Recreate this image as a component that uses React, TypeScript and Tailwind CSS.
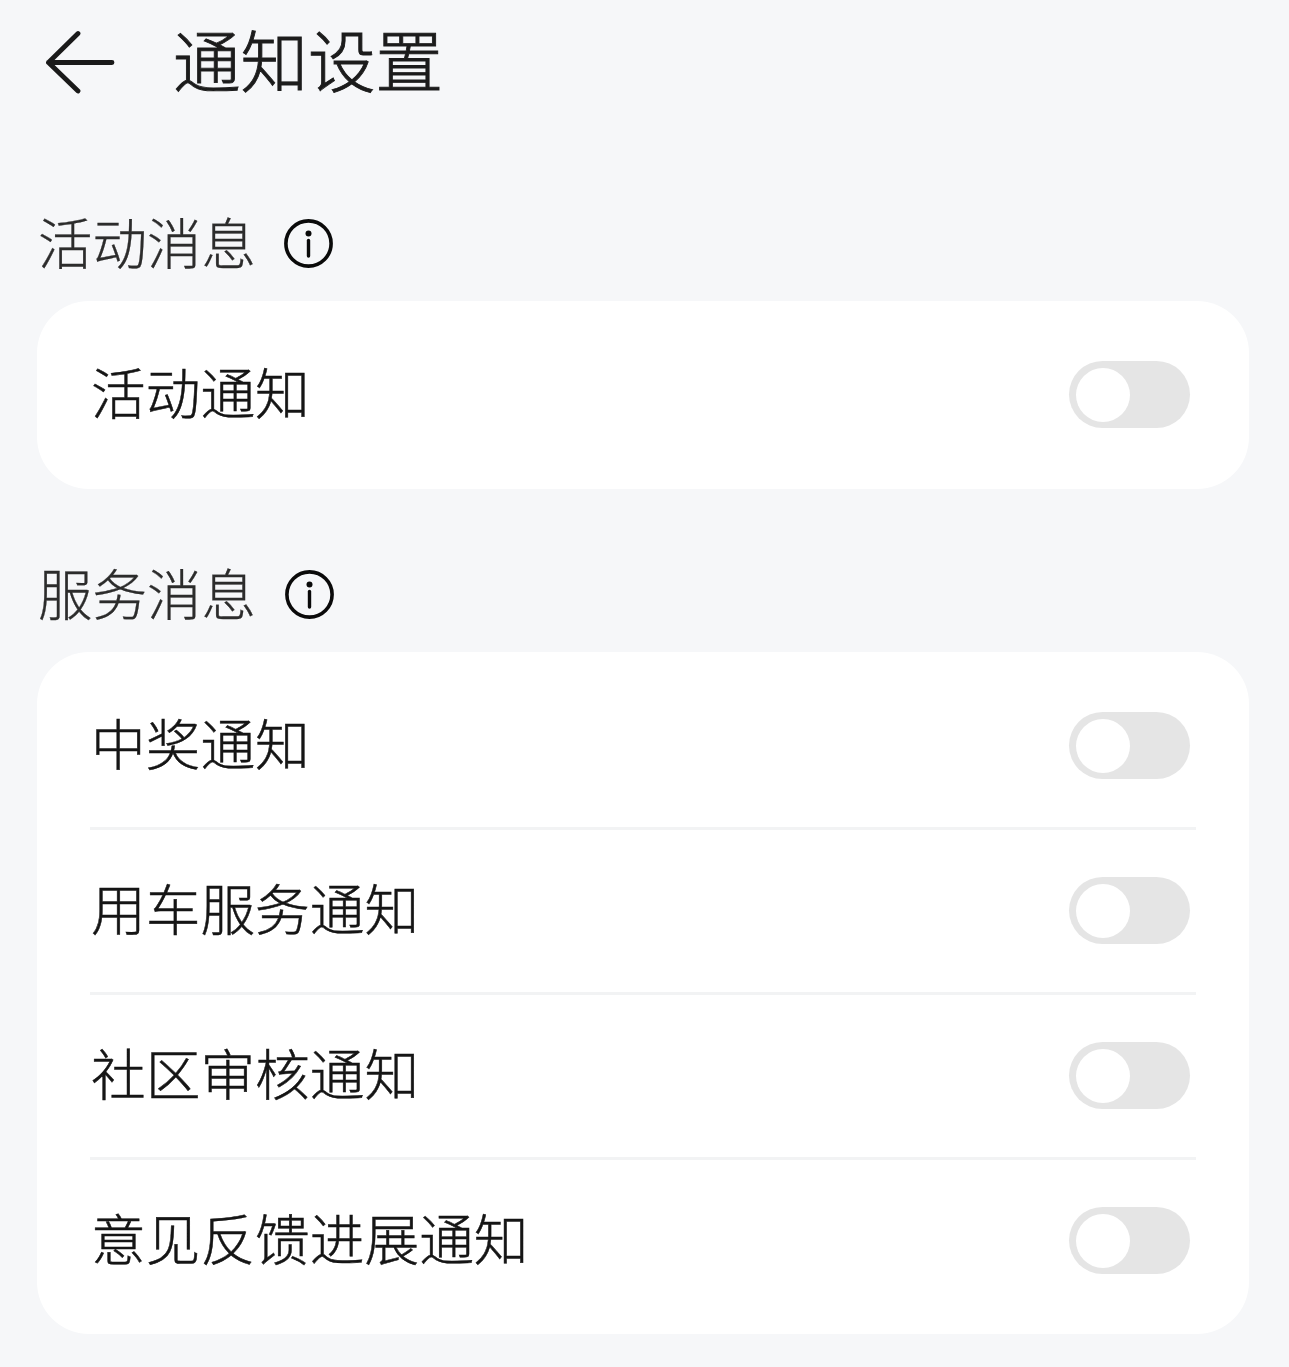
const font = '[font-family:"Noto_Sans_CJK_SC","Noto_Sans",sans-serif]';

function Info() {
  return (
    <svg width="50" height="50" viewBox="0 0 50 50" fill="none" className="shrink-0">
      <circle cx="24.5" cy="24.5" r="22.6" stroke="#0a0a0a" strokeWidth="3.6" />
      <circle cx="24.5" cy="14.5" r="3" fill="#0a0a0a" />
      <path d="M24.5 21.5V37" stroke="#0a0a0a" strokeWidth="3.4" strokeLinecap="round" />
    </svg>
  );
}

function Toggle() {
  return (
    <div className="-mt-[1px] flex h-[67px] w-[121px] shrink-0 items-center rounded-full bg-[#e5e5e5] pl-[7px]">
      <div className="h-[54px] w-[54px] rounded-full bg-white" />
    </div>
  );
}

function Row({ label }: { label: string }) {
  return (
    <div className="flex h-[162px] items-center justify-between pr-[6px]">
      <span className="pb-[7px] pl-[1px] text-[54.7px] leading-none font-light text-[#151515] [-webkit-text-stroke:0.5px_#151515]">{label}</span>
      <Toggle />
    </div>
  );
}

function Section({ title, rows, gap, bottom }: { title: string; rows: string[]; gap: string; bottom: string }) {
  return (
    <section>
      <div className={`flex h-[54px] items-center ${gap} pl-[1px]`}>
        <span className="pb-[6px] text-[54.5px] leading-none font-light text-[#2c2c2c] [-webkit-text-stroke:0.3px_#2c2c2c]">{title}</span>
        <Info />
      </div>
      <div className={`mt-[30px] rounded-[52px] bg-white px-[53px] pt-[13px] ${bottom}`}>
        {rows.map((r, i) => (
          <div key={r}>
            {i > 0 && <div className="h-[3px] bg-[#f2f3f4]" />}
            <Row label={r} />
          </div>
        ))}
      </div>
    </section>
  );
}

export default function App() {
  return (
    <div className={`h-[1367px] w-[1289px] overflow-hidden bg-[#f6f7f9] pr-[40px] pl-[37px] ${font}`}>
      <header className="flex h-[124px] items-center pl-[9px]">
        <svg width="70" height="64" viewBox="0 0 70 64" fill="none" className="shrink-0">
          <path d="M32 3.5L2.5 32.5L32 61M2.5 32.5H66" stroke="#1a1a1a" strokeWidth="4.8" strokeLinecap="round" strokeLinejoin="round" />
        </svg>
        <h1 className="ml-[57px] pb-[9px] text-[67.5px] leading-none font-light text-[#1c1c1c] [-webkit-text-stroke:0.9px_#1c1c1c]">通知设置</h1>
      </header>
      <div className="flex flex-col gap-[79px] pt-[93px]">
        <Section title="活动消息" rows={["活动通知"]} gap="gap-[28px]" bottom="pb-[13px]" />
        <Section title="服务消息" rows={["中奖通知", "用车服务通知", "社区审核通知", "意见反馈进展通知"]} gap="gap-[29px]" bottom="pb-[12px]" />
      </div>
    </div>
  );
}
